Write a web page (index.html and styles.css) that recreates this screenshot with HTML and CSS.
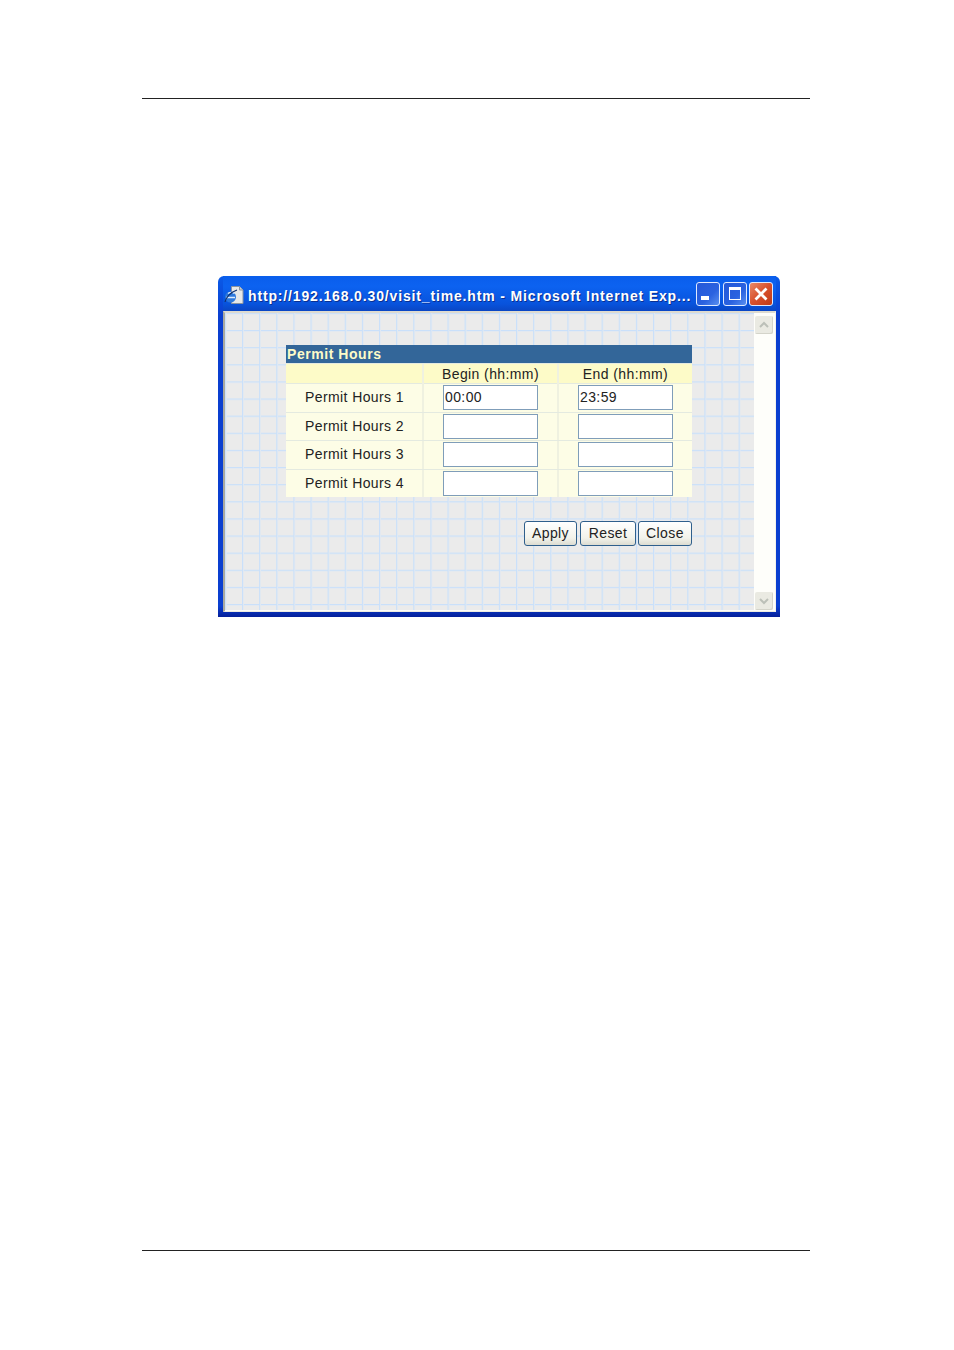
FILE: index.html
```html
<!DOCTYPE html>
<html lang="en">
<head>
    <meta charset="UTF-8">
    <title>Permit Hours</title>
    <link rel="stylesheet" href="styles.css">
</head>
<body>
    <div class="rule top-rule"></div>

    <div class="window">
        <div class="titlebar">
            <svg class="ie-icon" width="20" height="20" viewBox="0 0 20 20">
                <path d="M7.5 1.5h8l3.5 3.5v13.5H7.5z" fill="#e6e8e8" stroke="#8a94a0"/>
                <path d="M15.5 1.5v3.5h3.5" fill="#c4ccd4" stroke="#8a94a0"/>
                <circle cx="6.5" cy="12" r="5.5" fill="#2c78dc"/>
                <path d="M2 12.5h9M4 8.5c2-1.5 5-1.5 6.500 0" fill="none" stroke="#dcecff" stroke-width="1.500"/>
                <path d="M1 17c1-5 6-10 12-12" fill="none" stroke="#10306e" stroke-width="1.200"/>
            </svg>
            <span class="title-text">http://192.168.0.30/visit_time.htm - Microsoft Internet Exp...</span>
            <div class="win-buttons">
                <div class="win-btn">
                    <svg width="22" height="22" viewBox="0 0 22 22"><rect x="4" y="13" width="8" height="4" fill="#fff"/></svg>
                </div>
                <div class="win-btn">
                    <svg width="22" height="22" viewBox="0 0 22 22"><rect x="5.500" y="4.500" width="11" height="12" fill="none" stroke="#fff"/><rect x="5" y="4" width="12" height="3" fill="#fff"/></svg>
                </div>
                <div class="win-btn win-close">
                    <svg width="22" height="22" viewBox="0 0 22 22"><path d="M5.500 5.500l11 11M16.500 5.500l-11 11" stroke="#fff" stroke-width="2.800"/></svg>
                </div>
            </div>
        </div>

        <div class="client">
            <div class="page">
                <div class="panel">
                    <div class="panel-title">Permit Hours</div>
                    <div class="row head-row">
                        <div class="cell"></div>
                        <div class="cell">Begin (hh:mm)</div>
                        <div class="cell">End (hh:mm)</div>
                    </div>
                    <div class="row">
                        <div class="cell label">Permit Hours 1</div>
                        <div class="cell"><input class="time" type="text" value="00:00"></div>
                        <div class="cell"><input class="time" type="text" value="23:59"></div>
                    </div>
                    <div class="row">
                        <div class="cell label">Permit Hours 2</div>
                        <div class="cell"><input class="time" type="text"></div>
                        <div class="cell"><input class="time" type="text"></div>
                    </div>
                    <div class="row">
                        <div class="cell label">Permit Hours 3</div>
                        <div class="cell"><input class="time" type="text"></div>
                        <div class="cell"><input class="time" type="text"></div>
                    </div>
                    <div class="row">
                        <div class="cell label">Permit Hours 4</div>
                        <div class="cell"><input class="time" type="text"></div>
                        <div class="cell"><input class="time" type="text"></div>
                    </div>
                </div>
                <div class="actions">
                    <button class="btn btn-apply">Apply</button>
                    <button class="btn btn-reset">Reset</button>
                    <button class="btn btn-close">Close</button>
                </div>
            </div>
            <div class="scrollbar">
                <div class="arrow">
                    <svg width="18" height="18" viewBox="0 0 18 18"><path d="M5 11l4-4 4 4" fill="none" stroke="#bcc0b8" stroke-width="2"/></svg>
                </div>
                <div class="arrow">
                    <svg width="18" height="18" viewBox="0 0 18 18"><path d="M5 7l4 4 4-4" fill="none" stroke="#bcc0b8" stroke-width="2"/></svg>
                </div>
            </div>
        </div>
    </div>

    <div class="rule bottom-rule"></div>
</body>
</html>
```

FILE: styles.css
```css
html, body {
    margin: 0;
    padding: 0;
    background-color: white;
}
body {
    height: 1350px;
    overflow: hidden;
    font-family: "Liberation Sans", Arial, sans-serif;
}
.rule {
    width: 668px;
    height: 1px;
    margin-left: 142px;
    background-color: #222;
}
.top-rule {
    margin-top: 98px;
}
.bottom-rule {
    margin-top: 633px;
}

/* window frame */
.window {
    width: 562px;
    height: 341px;
    margin: 177px 0 0 218px;
    box-sizing: border-box;
    padding: 0 4px 5px 5px;
    display: flex;
    flex-direction: column;
    background: linear-gradient(to bottom, #0a5ae8, #0a3fd0 40px, #0a3fd0 330px, #06209a);
    border-radius: 6px 6px 0 0;
}
.titlebar {
    height: 35px;
    flex-shrink: 0;
    display: flex;
    align-items: center;
    box-sizing: border-box;
    padding: 2px 3px 0 1px;
    background: linear-gradient(to bottom, #0a5eec, #0c62f0 30%, #0853dc 80%, #0a46c4);
}
.ie-icon {
    flex-shrink: 0;
    margin-right: 4px;
}
.title-text {
    flex: 1;
    margin-top: 2px;
    color: white;
    font-size: 14px;
    font-weight: bold;
    letter-spacing: 0.85px;
    white-space: nowrap;
    text-shadow: 1px 1px 0 #0a2f90;
}
.win-buttons {
    display: flex;
    gap: 3px;
    margin-top: -1px;
}
.win-btn {
    width: 22px;
    height: 22px;
    border: 1px solid #dfeaff;
    border-radius: 3px;
    background: linear-gradient(135deg, #2458d8, #2a62e0 60%, #5a90f0);
}
.win-btn svg {
    display: block;
}
.win-close {
    margin-left: -1px;
    background: linear-gradient(135deg, #e88a68, #d8502c 50%, #c03a18);
}

/* page area */
.client {
    flex: 1;
    display: flex;
    background-color: #fefefa;
    border-top: 2px solid #dedbd0;
    border-left: 2px solid #a8a8a0;
    border-bottom: 1px solid #eeece2;
    border-right: 1px solid #f4f2ea;
}
.page {
    width: 529px;
    height: 297px;
    box-sizing: border-box;
    padding: 32px 0 0 61px;
    background-color: #ebebeb;
    background-image:
        linear-gradient(to right, #c9e0fa 1px, #e2e9f1 1px, #e2e9f1 2px, transparent 2px),
        linear-gradient(to bottom, #c9e0fa 1px, #e2e9f1 1px, #e2e9f1 2px, transparent 2px);
    background-size: 17.13px 17.13px;
    background-position: 17px 17px;
}
.panel {
    width: 406px;
    background-color: #fdfde6;
}
.panel-title {
    height: 18px;
    line-height: 18px;
    background-color: #336699;
    color: #fdfbc8;
    font-size: 14px;
    font-weight: bold;
    letter-spacing: 0.55px;
    padding-left: 1px;
}
.row {
    display: grid;
    grid-template-columns: 138px 135px 133px;
    height: 28.6px;
    border-top: 1px solid #e4eae0;
    box-sizing: border-box;
    color: #222;
    font-size: 14px;
    letter-spacing: 0.4px;
}
.head-row {
    height: 20px;
    background-color: #fdfbc8;
    text-align: center;
    line-height: 21px;
}
.cell {
    border-right: 2px solid #eff1e0;
    box-sizing: border-box;
}
.cell:last-child {
    border-right: none;
}
.label {
    padding-left: 19px;
    line-height: 27px;
}
.time {
    display: block;
    width: 95px;
    height: 25px;
    box-sizing: border-box;
    margin: 1px 0 0 19px;
    padding: 0 1px 2px 1px;
    border: 1px solid #7f9db9;
    background-color: white;
    color: #222;
    font-family: "Liberation Sans", Arial, sans-serif;
    font-size: 14px;
    letter-spacing: 0.4px;
    outline: none;
}
.actions {
    width: 406px;
    display: flex;
    justify-content: flex-end;
    gap: 2px;
    margin-top: 24px;
}
.btn {
    height: 25px;
    padding: 0 0 2px;
    border: 1px solid #2f5f8c;
    border-radius: 3px;
    background: linear-gradient(to bottom, #ffffff, #f2f2ea 70%, #dcdcd2);
    color: #222;
    font-family: "Liberation Sans", Arial, sans-serif;
    font-size: 14px;
    letter-spacing: 0.4px;
}
.btn-apply { width: 53px; margin-right: 1px; }
.btn-reset { width: 56px; }
.btn-close { width: 54px; }

/* scrollbar, disabled */
.scrollbar {
    width: 20px;
    display: flex;
    flex-direction: column;
    justify-content: space-between;
    align-items: center;
    padding: 3px 0 1px;
    box-sizing: border-box;
}
.arrow {
    width: 18px;
    height: 18px;
    border-radius: 2px;
    background-color: #eaeae2;
    box-shadow: inset -1px -1px 0 #d4d4ca;
}
.arrow svg {
    display: block;
}
```
